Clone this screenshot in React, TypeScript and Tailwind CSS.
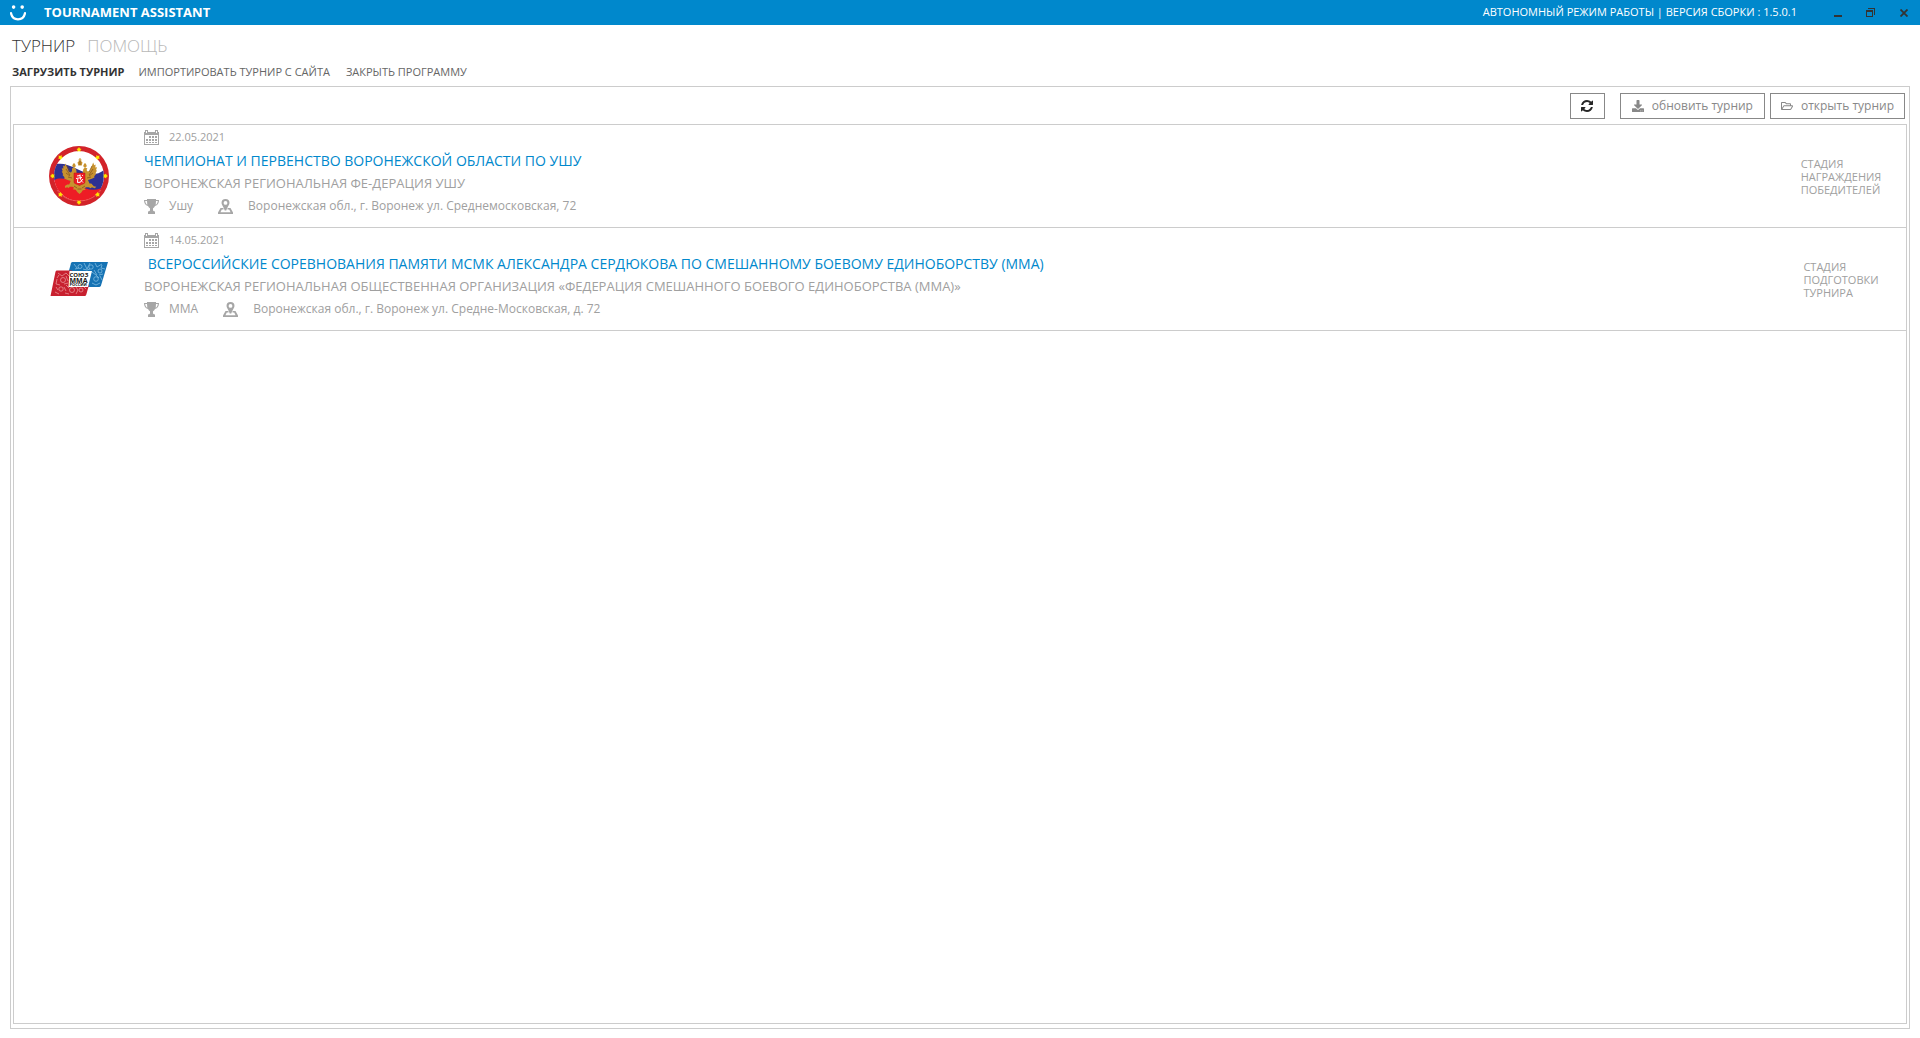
import React from "react";
import { FaDownload, FaRegFolderOpen } from "react-icons/fa";

type Tournament = {
  id: string;
  logo: React.ReactNode;
  date: string;
  title: string;
  organizer: string;
  sport: string;
  address: string;
  stage: string[];
};

function SmileLogo() {
  return (
    <svg className="h-4 w-4" viewBox="0 0 16 16" fill="none" aria-hidden="true">
      <circle cx="3.6" cy="2.1" r="1.8" fill="#fff" />
      <circle cx="12.2" cy="2.1" r="1.8" fill="#fff" />
      <path d="M1 8.2C1.8 12.2 4.6 14.3 8 14.3S14.2 12.2 15 8.2" stroke="#fff" strokeWidth="2.3" strokeLinecap="round" />
    </svg>
  );
}

function RefreshIcon() {
  return (
    <svg className="h-3 w-3" viewBox="0 0 1536 1536" fill="currentColor" aria-hidden="true">
      <path d="M1511 928q0 5-1 7-64 268-268 434.5T764 1536q-146 0-282.5-55T238 1324l-129 129q-19 19-45 19t-45-19-19-45V960q0-26 19-45t45-19h448q26 0 45 19t19 45-19 45l-137 137q71 66 161 102t187 36q134 0 250-65t186-179q11-17 53-117 8-23 30-23h192q13 0 22.5 9.5t9.5 22.5zm25-800v448q0 26-19 45t-45 19h-448q-26 0-45-19t-19-45 19-45l138-138Q969 256 768 256q-134 0-250 65T332 500q-11 17-53 117-8 23-30 23H50q-13 0-22.5-9.5T18 608v-7q65-268 270-434.5T768 0q146 0 284 55.5T1297 212l130-129q19-19 45-19t45 19 19 45z" />
    </svg>
  );
}

function CalendarIcon() {
  return (
    <svg className="h-[15px] w-[15px]" viewBox="0 0 15 15" fill="#a6a6a6" shapeRendering="crispEdges" aria-hidden="true">
      <path fillRule="evenodd" d="M0 2h2v2h2V2h7v2h2V2h2v13H0zM1 5v9h13V5z" />
      <path d="M0 2h1v3H0zM14 2h1v3h-1zM4 2h7v3H4z" />
      <path fillRule="evenodd" d="M1 0h3v4H1zM2 1v2h1V1zM11 0h3v4h-3zM12 1v2h1V1z" />
      <path d="M5 6h2v2H5zM8 6h2v2H8zM11 6h2v2h-2zM2 9h2v2H2zM5 9h2v2H5zM8 9h2v2H8zM11 9h2v2h-2zM2 12h2v1H2zM5 12h2v1H5zM8 12h2v1H8zM11 12h2v1h-2z" />
    </svg>
  );
}

function TrophyIcon() {
  return (
    <svg className="h-[15px] w-[15px]" viewBox="0 0 15 15" fill="#a6a6a6" aria-hidden="true">
      <path
        fillRule="evenodd"
        d="M3 0h9v1h3c0 3.400-1.400 5.600-4 6-.6 1.200-1.300 1.900-2 2.200V11c0 .8.500 1.300 2 1.600V15H4v-2.400c1.500-.3 2-.8 2-1.600V9.200C5.300 8.900 4.600 8.200 4 7 1.400 6.600 0 4.400 0 1h3zM1.200 2c.2 1.900.9 3.200 2.100 3.700L3 2zM13.800 2H12l-.3 3.700c1.200-.5 1.900-1.800 2.100-3.700z"
      />
    </svg>
  );
}

function PinIcon() {
  return (
    <svg className="h-[15px] w-[15px]" viewBox="0 0 15 15" fill="#a6a6a6" aria-hidden="true">
      <path
        fillRule="evenodd"
        d="M7.500 0a4 4 0 0 1 4 4c0 2.100-2.500 4.200-3.200 7.500H6.700C6 8.200 3.500 6.100 3.500 4a4 4 0 0 1 4-4zm0 2a1.900 1.900 0 1 0 0 3.800 1.900 1.900 0 0 0 0-3.800z"
      />
      <path d="M2.500 9h3v1.600H3.800L2.400 13.200h10.200l-1.400-2.600H9.500V9h3L15 13.500V15H0v-1.500z" />
    </svg>
  );
}

function WushuEmblem() {
  return (
    <svg className="h-[60px] w-[60px]" viewBox="0 0 60 60" role="img" aria-label="Федерация ушу">
      <circle cx="30" cy="30" r="30" fill="#d2232a" />
      <circle cx="30" cy="30" r="25" fill="#fff" />
      <path d="M8 18C14 17 20 19 28 23s18 8 26.400 1.500c1.200 7 .2 13-2.900 18.500-8 4-16 2-24-3S11 33 5.300 34.500C4.400 28 5.500 22.500 8 18z" fill="#2e3192" />
      <path d="M5.400 34C11 31 20 33 28 38s15 7.500 23.700 4.500C48 50 40 55 30 55S7.500 48 5.400 34z" fill="#ee1c25" />
      <path d="M8 44c5 7.500 13 11 22 11s17-4 22-11" fill="none" stroke="#f2615f" strokeWidth=".7" />
      <g fill="#ffe600">
        <path id="wushu-star" d="M30 1l.9 1.500 1.600.4-1.100 1.200.2 1.700L30 5.100l-1.600.7.2-1.700-1.100-1.200 1.600-.4z" />
        <use href="#wushu-star" transform="rotate(45 30 30)" />
        <use href="#wushu-star" transform="rotate(90 30 30)" />
        <use href="#wushu-star" transform="rotate(135 30 30)" />
        <use href="#wushu-star" transform="rotate(180 30 30)" />
        <use href="#wushu-star" transform="rotate(225 30 30)" />
        <use href="#wushu-star" transform="rotate(270 30 30)" />
        <use href="#wushu-star" transform="rotate(315 30 30)" />
      </g>
      <g fill="#c8922e">
        <path d="M29.500 13.500h1V12h1v1.500h1v1h-1l2 2-.8 3h-3.400l-.8-3 2-2h-1zM24 18l1-1 1 1 .8 2-1 1.500h-1.600l-1-1.500zM35 18l1-1 1 1 .8 2-1 1.500h-1.600l-1-1.500z" />
        <path d="M23 22.500c1.500-1.200 3.500-.8 4.200 1l.5 4h6l.5-4c.7-1.800 2.700-2.200 4.200-1L37.500 24l1.200 1.500 2-.5 3.500-8.500 1 2.800 1.400-.9-.3 3.200 1.700-.3-1 2.900 1 .4-1.500 2.600.7.900-2 2.200.3 1.100-2.600 1.300-3.900 1.300 1.500 3.500h1.800l2.500 2.800 2.500.5-1.500 1.500-3-1-1 1-2-1h-2.500l-2 1 1.500 1.500-3 .5-1.500 2.200L30.500 48l-2.300-2-1.500-2.200-3-.5 1.500-1.500-2-1h-2.500l-1 1.200-1.500-.7-2 .7-.3-2 2.300-1.500h2l1.500-3.500-3.900-1.300-2.600-1.300.3-1.100-2-2.200.7-.9-1.500-2.600 1-.4-1-2.900 1.700.3-.3-3.200 1.400.9 1-2.800 3.500 8.500 2 .5 1-1.500z" />
      </g>
      <g fill="none" stroke="#7b4d1d" strokeWidth=".7">
        <path d="M18 20l3 6M17 23l4 6M17 27l4 3M19 31l4 1M43 20l-3 6M44 23l-4 6M44 27l-4 3M42 31l-4 1M25 40l3 2M36 40l-3 2M28.500 43h4M31 15v4" />
      </g>
      <path d="M25 27h11v9c0 2-3 2-5.500 3.500C28 38 25 38 25 36z" fill="#ee1c25" stroke="#b5121b" strokeWidth=".5" />
      <path d="M28 30l3-.5M27 32.500l6-1M31 28.500c0 4 1 6.500 3 8M28.800 33l-.3 3.500 2.500-.3M33 29l.9.8M34 33l-3.500 4" fill="none" stroke="#fff" strokeWidth="1" />
    </svg>
  );
}

function MmaEmblem() {
  return (
    <svg className="h-[34px] w-[58px]" viewBox="0 0 58 34" role="img" aria-label="Союз ММА России">
      <path d="M22.500 0H58l-7 23.500q-.6 1.500-2 1.500H14.500L21 1.200Q21.400 0 22.500 0z" fill="#1673b4" />
      <g fill="none" stroke="#8fc6e6" strokeWidth=".7">
        <circle cx="30" cy="4.500" r="2" />
        <circle cx="41" cy="5" r="2.200" />
        <circle cx="50" cy="9" r="2" />
        <circle cx="46" cy="17" r="2.300" />
        <path d="M24 2l3 4M34 1l3 6 3-6M45 1l2 4 5-3M42 10l4 3 3 3M52 3l-1 3 4 1M42 21l4 2 4-2M50 14l2 4M25 7l4-1M33 7l4 1 3-1M44 8l3 5M53 12l-4 1" />
      </g>
      <path d="M7 8.500h15V23h17l-2.700 9.500q-.3 1.500-1.800 1.500H.500l5-24.200Q5.900 8.500 7 8.500z" fill="#c8202f" />
      <g fill="none" stroke="#eda0a4" strokeWidth=".7">
        <circle cx="13" cy="18" r="2.500" />
        <circle cx="11" cy="27" r="2.200" />
        <circle cx="22" cy="28" r="2.500" />
        <circle cx="31" cy="28" r="2" />
        <path d="M8 11l4 3 4-3 3 3M7 17l-1 5 4 1M16 14l2 5M5 30l4 2M16 23l3 3M15 31l4 1M26 25l2 3-2 4M34 25l2 2M9 13l-2 3M14 22l4-1M6 25l2 3M14 25l2 4" />
      </g>
      <path d="M19.500 9H42l-4 16H18.500z" fill="#fff" />
      <g fill="#161616" fontFamily="Open Sans, sans-serif" fontWeight="700">
        <text x="19.500" y="15" fontSize="6">СОЮЗ</text>
        <text x="19.500" y="20.500" fontSize="7">ММА</text>
        <text x="19.500" y="24.200" fontSize="4">РОССИИ</text>
      </g>
    </svg>
  );
}

const tournaments: Tournament[] = [
  {
    id: "wushu",
    logo: <WushuEmblem />,
    date: "22.05.2021",
    title: "ЧЕМПИОНАТ И ПЕРВЕНСТВО ВОРОНЕЖСКОЙ ОБЛАСТИ ПО УШУ",
    organizer: "ВОРОНЕЖСКАЯ РЕГИОНАЛЬНАЯ ФЕ-ДЕРАЦИЯ УШУ",
    sport: "Ушу",
    address: "Воронежская обл., г. Воронеж ул. Среднемосковская, 72",
    stage: ["СТАДИЯ", "НАГРАЖДЕНИЯ", "ПОБЕДИТЕЛЕЙ"],
  },
  {
    id: "mma",
    logo: <MmaEmblem />,
    date: "14.05.2021",
    title:
      " ВСЕРОССИЙСКИЕ СОРЕВНОВАНИЯ ПАМЯТИ МСМК АЛЕКСАНДРА СЕРДЮКОВА ПО СМЕШАННОМУ БОЕВОМУ ЕДИНОБОРСТВУ (ММА)",
    organizer:
      "ВОРОНЕЖСКАЯ РЕГИОНАЛЬНАЯ ОБЩЕСТВЕННАЯ ОРГАНИЗАЦИЯ «ФЕДЕРАЦИЯ СМЕШАННОГО БОЕВОГО ЕДИНОБОРСТВА (ММА)»",
    sport: "ММА",
    address: "Воронежская обл., г. Воронеж ул. Средне-Московская, д. 72",
    stage: ["СТАДИЯ", "ПОДГОТОВКИ", "ТУРНИРА"],
  },
];

function TitleBar() {
  return (
    <header className="flex h-[25px] shrink-0 items-center bg-[#0088cc] pl-[10px] text-white">
      <SmileLogo />
      <h1 className="ml-[18px] pb-[2px] text-[13px] leading-4 font-bold">TOURNAMENT ASSISTANT</h1>
      <p className="mr-6 ml-auto pb-[2px] text-[11px] leading-4">АВТОНОМНЫЙ РЕЖИМ РАБОТЫ | ВЕРСИЯ СБОРКИ : 1.5.0.1</p>
      <div className="flex text-[#333333]">
        <button type="button" aria-label="Свернуть" className="flex h-6 w-[33px] items-center justify-center">
          <svg className="h-2 w-2" viewBox="0 0 8 8" fill="currentColor" shapeRendering="crispEdges">
            <path d="M0 6h8v2H0z" />
          </svg>
        </button>
        <button type="button" aria-label="Восстановить" className="flex h-6 w-[33px] items-center justify-center">
          <svg className="h-[9px] w-[9px]" viewBox="0 0 9 9" fill="currentColor" shapeRendering="crispEdges">
            <path fillRule="evenodd" d="M0 2h7v7H0zM1 4v4h5V4zM2 0h7v7H8V1H2z" />
          </svg>
        </button>
        <button type="button" aria-label="Закрыть" className="flex h-6 w-[33px] items-center justify-center">
          <svg className="h-2 w-2" viewBox="0 0 8 8" stroke="currentColor" strokeWidth="1.8">
            <path d="M.5.500l7 7M7.500.500l-7 7" />
          </svg>
        </button>
      </div>
    </header>
  );
}

function TournamentRow({ item }: { item: Tournament }) {
  return (
    <li className="flex items-center border-b border-[#cccccc] text-[#a0a0a0]">
      <div className="flex w-[130px] shrink-0 justify-center">{item.logo}</div>
      <div className="flex min-w-0 flex-1 flex-col pt-[2px] pb-[11px]">
        <div className="flex h-5 items-center gap-[10px] text-[11px]">
          <CalendarIcon />
          <time>{item.date}</time>
        </div>
        <a href={`#${item.id}`} className="flex h-[26px] items-center text-[14px] whitespace-pre text-[#0088cc]">
          {item.title}
        </a>
        <p className="mt-[2px] flex h-[18px] items-center text-[13px]">{item.organizer}</p>
        <div className="mt-[3px] flex h-5 items-center text-[12px]">
          <TrophyIcon />
          <span className="ml-[10px]">{item.sport}</span>
          <span className="mr-[15px] ml-[25px]">
            <PinIcon />
          </span>
          <address className="not-italic">{item.address}</address>
        </div>
      </div>
      <div className="flex w-[130px] shrink-0 justify-center">
        <p className="text-[11px] leading-[13px]">
          {item.stage.map((line) => (
            <span key={line} className="block">
              {line}
            </span>
          ))}
        </p>
      </div>
    </li>
  );
}

export default function App() {
  return (
    <div className="flex min-h-screen flex-col bg-white font-['Open_Sans','Noto_Sans',sans-serif] text-[#333333]">
      <TitleBar />
      <nav className="flex flex-col pl-3">
        <div className="flex h-10 items-center gap-3 pt-[2px] text-[17px] font-light">
          <button type="button" className="text-[#333333]">ТУРНИР</button>
          <button type="button" className="text-[#b8b8b8]">ПОМОЩЬ</button>
        </div>
        <div className="flex h-[21px] items-start text-[11px] leading-[14px]">
          <button type="button" className="mr-[14px] font-bold">ЗАГРУЗИТЬ ТУРНИР</button>
          <button type="button" className="mr-4 text-[#666666]">ИМПОРТИРОВАТЬ ТУРНИР С САЙТА</button>
          <button type="button" className="text-[#666666]">ЗАКРЫТЬ ПРОГРАММУ</button>
        </div>
      </nav>
      <main className="mx-[10px] mb-[9px] flex flex-1 flex-col border border-[#cccccc] px-[2px] pb-1">
        <div className="flex h-[37px] shrink-0 items-center justify-end pt-px pr-[2px] text-[12px] text-[#888888]">
          <button type="button" aria-label="Обновить список" className="mr-[15px] flex h-[26px] w-[35px] items-center justify-center border border-[#888888] text-[#262626]">
            <RefreshIcon />
          </button>
          <button type="button" className="mr-[5px] flex h-[26px] items-center gap-2 border border-[#888888] px-[11px]">
            <FaDownload className="h-3 w-3" />
            обновить турнир
          </button>
          <button type="button" className="flex h-[26px] items-center gap-2 border border-[#888888] px-[10px]">
            <FaRegFolderOpen className="h-3 w-3" />
            открыть турнир
          </button>
        </div>
        <ul className="flex-1 border border-[#cccccc]">
          {tournaments.map((item) => (
            <TournamentRow key={item.id} item={item} />
          ))}
        </ul>
      </main>
    </div>
  );
}
